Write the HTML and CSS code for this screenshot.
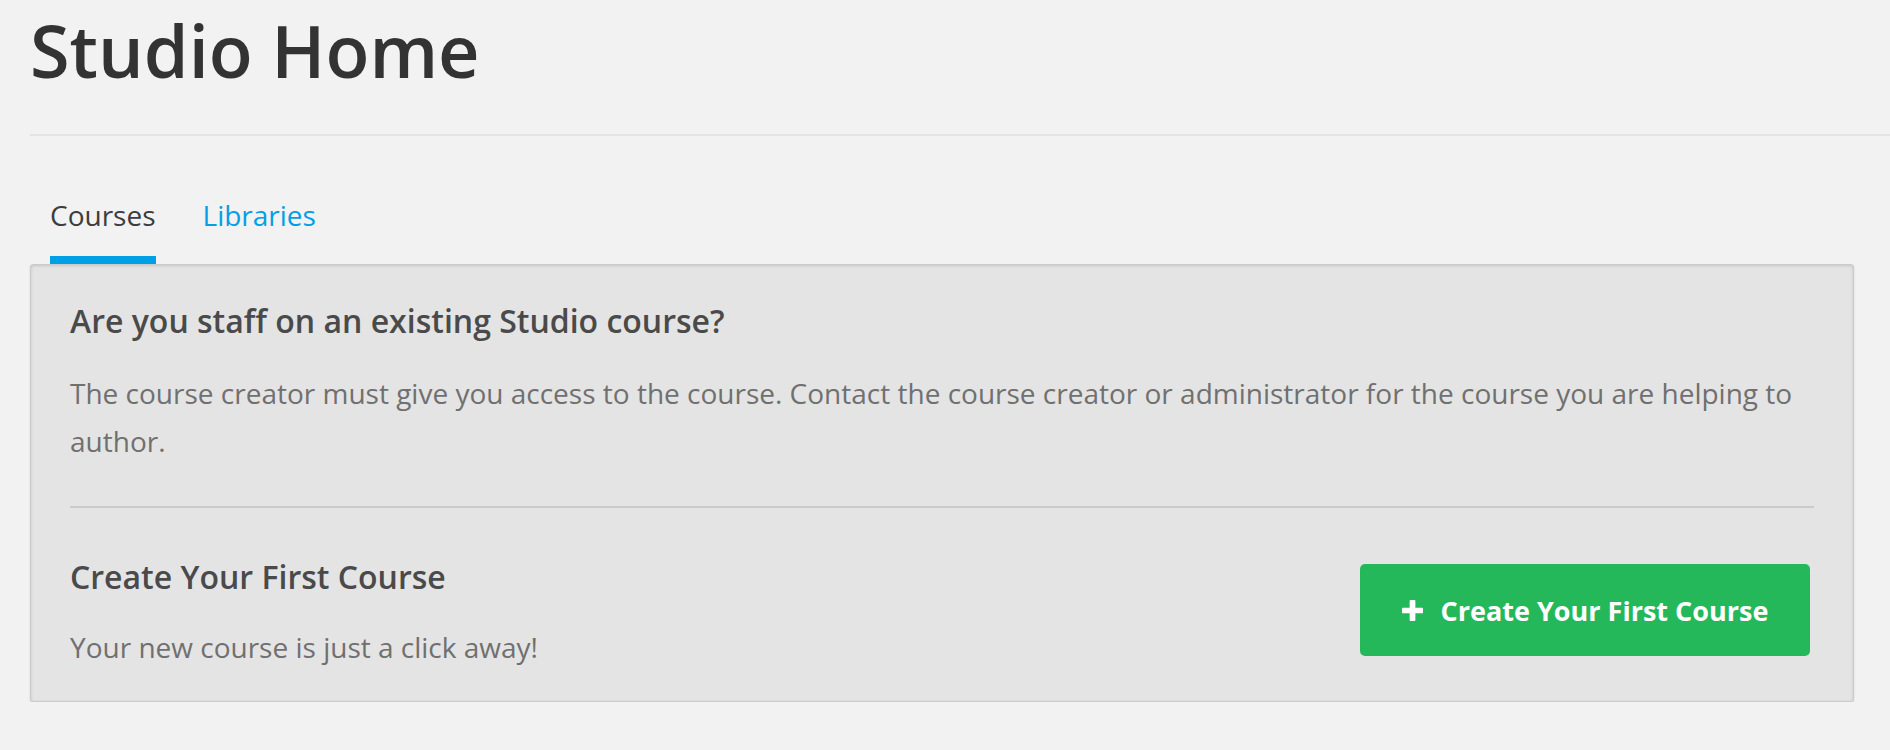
FILE: index.html
```html
<!DOCTYPE html>
<html lang="en">
<head>
<meta charset="utf-8">
<title>Studio Home</title>
<link rel="stylesheet" href="styles.css">
</head>
<body>
<div class="page">
  <header class="page-header">
    <h1 class="page-title">Studio Home</h1>
  </header>
  <nav class="tabs">
    <a class="tab tab-active" href="#">Courses</a>
    <a class="tab" href="#">Libraries</a>
  </nav>
  <section class="panel">
    <div class="panel-block">
      <h2 class="panel-heading">Are you staff on an existing Studio course?</h2>
      <p class="panel-text">The course creator must give you access to the course. Contact the course creator or administrator for the course you are helping to author.</p>
    </div>
    <div class="panel-row">
      <div class="panel-copy">
        <h2 class="panel-heading">Create Your First Course</h2>
        <p class="panel-text panel-text-tight">Your new course is just a click away!</p>
      </div>
      <a class="btn-create" href="#">
        <svg class="btn-icon" width="22" height="22" viewBox="0 0 22 22" aria-hidden="true"><rect x="8" y="0" width="6" height="22" rx="1" fill="#fff"/><rect x="0" y="8" width="22" height="6" rx="1" fill="#fff"/></svg>
        <span>Create Your First Course</span>
      </a>
    </div>
  </section>
</div>
</body>
</html>
```
FILE: styles.css
```css
html, body {
  margin: 0;
  padding: 0;
  background: #f2f2f2;
}
body {
  font-family: "Open Sans", "DejaVu Sans", sans-serif;
  color: #333;
}
.page {
  padding-left: 30px;
}
.page-header {
  padding-top: 7px;
  padding-bottom: 41px;
  border-bottom: 2px solid #e4e4e4;
}
.page-title {
  margin: 0;
  font-size: 72px;
  line-height: 86px;
  font-weight: 600;
  color: #333;
}
.tabs {
  display: flex;
  gap: 47px;
  padding-left: 20px;
  margin-top: 60px;
}
.tab {
  font-size: 28px;
  line-height: 38px;
  padding-bottom: 22px;
  border-bottom: 8px solid transparent;
  color: #009fe6;
  text-decoration: none;
}
.tab-active {
  color: #3d3d3d;
  border-bottom-color: #009fe6;
}
.panel {
  margin-right: 36px;
  background: #e4e4e4;
  border: 1px solid #cbcbcb;
  border-radius: 3px;
  box-shadow: inset 0 1px 3px rgba(0,0,0,0.14), 0 1px 2px rgba(0,0,0,0.14);
  padding: 36px 39px 30px;
}
.panel-block {
  padding-bottom: 41px;
  border-bottom: 2px solid #cacaca;
}
.panel-heading {
  margin: 0;
  font-size: 32px;
  line-height: 40px;
  font-weight: 600;
  color: #4a4a4a;
}
.panel-text {
  margin: 28px 0 0;
  font-size: 28px;
  line-height: 48px;
  color: #707070;
}
.panel-text-tight {
  margin-top: 26px;
}
.panel-row {
  display: flex;
  align-items: flex-start;
  justify-content: space-between;
  padding-top: 49px;
}
.btn-create {
  display: flex;
  align-items: center;
  gap: 18px;
  width: 450px;
  height: 92px;
  box-sizing: border-box;
  justify-content: center;
  margin-top: 7px;
  margin-right: 4px;
  background: #25b85a;
  border-radius: 5px;
  color: #fff;
  font-size: 27px;
  font-weight: 700;
  text-decoration: none;
}
.btn-icon {
  display: block;
  width: 21px;
  height: 21px;
}
```
